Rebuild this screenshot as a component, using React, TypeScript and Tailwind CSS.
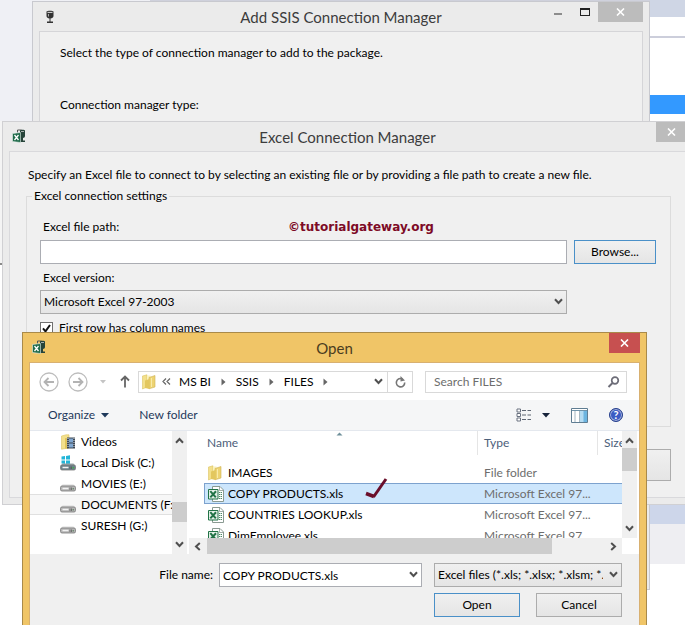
import { useState, type ReactNode } from "react";

const buttonClass =
  "border border-[#acacac] bg-linear-to-b from-[#f0f0f0] to-[#e5e5e5] text-black";
const primaryButtonClass =
  "border border-[#4a90c8] bg-linear-to-b from-[#f0f0f0] to-[#e5e5e5] text-black";

const drives = [
  { label: "Videos", kind: "videos" },
  { label: "Local Disk (C:)", kind: "system" },
  { label: "MOVIES (E:)", kind: "drive" },
  { label: "DOCUMENTS (F:)", kind: "drive" },
  { label: "SURESH (G:)", kind: "drive" },
];

const files = [
  { name: "IMAGES", type: "File folder", folder: true },
  { name: "COPY PRODUCTS.xls", type: "Microsoft Excel 97...", folder: false },
  { name: "COUNTRIES LOOKUP.xls", type: "Microsoft Excel 97...", folder: false },
  { name: "DimEmployee.xls", type: "Microsoft Excel 97...", folder: false },
];

function Chevron({ className = "" }: { className?: string }) {
  return (
    <svg viewBox="0 0 9 7" className={`h-[7px] w-[9px] ${className}`} aria-hidden="true">
      <path d="M1 1.2 4.5 5 8 1.2" fill="none" stroke="#505050" strokeWidth="2" />
    </svg>
  );
}

function CloseIcon() {
  return (
    <svg viewBox="0 0 9 8" className="h-2 w-[9px]" aria-hidden="true">
      <path d="M1 .5 8 7.5M8 .5 1 7.5" stroke="#fff" strokeWidth="1.6" />
    </svg>
  );
}

function ConnectionIcon() {
  return (
    <svg viewBox="0 0 10 14" className="h-3.5 w-2.5" aria-hidden="true">
      <path d="M1.500 1.500C2 .6 8 .6 8.500 1.500V6c0 1.500-1.500 2.500-3 2.500v3h2.500V13h-6v-1.500h2.500v-3C3 8.500 1.500 7.500 1.500 6Z" fill="#333" />
      <path d="M2.500 2.400h5" stroke="#ddd" strokeWidth="1" />
      <path d="M3.500 4v2.500" stroke="#aaa" strokeWidth="1" />
    </svg>
  );
}

function ExcelLinkIcon() {
  return (
    <svg viewBox="0 0 14 15" className="h-[15px] w-3.5" aria-hidden="true">
      <path d="M5.500 3.500V1h4" fill="none" stroke="#555" />
      <path d="M8 1.500C8 .5 13 .5 13 1.500V7c0 1-1 2-2 2v2.500h2V13H8Z" fill="#26443a" />
      <path d="M9 2.500h3" stroke="#ccc" strokeWidth=".8" />
      <path d="M.5 4.500 8.500 3.500v10L.5 12.500Z" fill="#1f6b4a" stroke="#e8f0ec" strokeWidth=".6" />
      <path d="m2.500 6 4 5M6.500 6l-4 5" stroke="#fff" strokeWidth="1.300" />
    </svg>
  );
}

function FolderIcon() {
  return (
    <svg viewBox="0 0 14 16" className="h-4 w-3.5 shrink-0" aria-hidden="true">
      <path d="M.5 2 5 .8V13l-4.500 2Z" fill="#f3e08b" stroke="#dcc262" strokeWidth=".6" />
      <path d="M5 1.500h3.500V14L5 13Z" fill="#fbf2bd" />
      <path d="M7 3.500 13 1.500V13l-6 1.800Z" fill="#edd372" stroke="#cfb255" strokeWidth=".6" />
      <path d="M3 6.500 7.500 5v10L3 14Z" fill="#e3c75e" />
      <path d="M9.500 4v9" stroke="#f9eba8" />
    </svg>
  );
}

function XlsIcon() {
  return (
    <svg viewBox="0 0 16 16" className="h-4 w-4 shrink-0" aria-hidden="true">
      <path d="M4.500.5h7.500l3.500 3.500v11.500h-11Z" fill="#fff" stroke="#8a9a92" />
      <path d="M11.500.8V4.500h3.500" fill="none" stroke="#8a9a92" strokeWidth=".8" />
      <path d="M11 6.500h3M11 8.500h3M11 10.500h3M11 12.500h3" stroke="#4d8a66" strokeWidth="1" strokeDasharray="1.300 .5" />
      <path d="M.5 3.500h9.500v9.500H.5Z" fill="#e6f2ea" stroke="#217346" />
      <path d="m2.300 5.200 5.500 6.200M8 5.200l-5.700 6.200" stroke="#217346" strokeWidth="2" />
    </svg>
  );
}

function DriveIcon({ kind }: { kind: string }) {
  if (kind === "videos") {
    return (
      <svg viewBox="0 0 16 16" className="h-4 w-4 shrink-0" aria-hidden="true">
        <path d="M1.500 2 6 .8h3V14l-7.500 1.200Z" fill="#f3e08b" stroke="#dcc262" strokeWidth=".6" />
        <path d="M5 4h3v10.500H5Z" fill="#e0c45c" />
        <path d="M7 3.500h8v11H7Z" fill="#3c4653" />
        <path d="M9 4.500h4v4H9ZM9 9.500h4v4H9Z" fill="#7fa6d0" />
        <path d="M8 4v10M14 4v10" stroke="#dfe4ea" strokeWidth="1" strokeDasharray="1 1" />
      </svg>
    );
  }
  return (
    <svg viewBox="0 0 16 16" className="h-4 w-4 shrink-0" aria-hidden="true">
      {kind === "system" && (
        <path d="m1.500 1.500 3.500-.5v3.500H1.500ZM6 .9l4-.6v4.200H6ZM1.500 5.500H5V9l-3.500-.5ZM6 5.500h4v4L6 9Z" fill="#22b5d8" />
      )}
      <path d="M2.500 8.500h11l2 2.500H.5Z" fill={kind === "system" ? "#9aa7ad" : "#dcdcdc"} />
      <rect x=".5" y="10" width="15" height="5" rx="1.500" fill={kind === "system" ? "#6d838c" : "#b4b4b4"} stroke="#7a7a7a" strokeWidth=".8" />
      <path d="M2.500 12.500h6" stroke="#f2f2f2" strokeWidth="1.500" />
      <path d="M10 11.500v2.500M11.500 11.500v2.500" stroke="#555" strokeWidth=".7" />
      <path d="M12.500 12.800h1.500" stroke={kind === "system" ? "#3fae49" : "#6f8a72"} strokeWidth="1.400" />
    </svg>
  );
}

type TitleBarProps = {
  icon: ReactNode;
  title: string;
  titleClass?: string;
  children: ReactNode;
};

function TitleBar({ icon, title, titleClass = "text-[#3c3c3c]", children }: TitleBarProps) {
  return (
    <header className="grid h-[29px] grid-cols-[1fr_auto_1fr] items-center">
      <div className="pl-[3px]">{icon}</div>
      <h2 className={`text-[15px] leading-5 ${titleClass}`}>{title}</h2>
      <div className="flex items-start justify-end self-start">{children}</div>
    </header>
  );
}

function Desktop() {
  return (
    <div className="flex h-full justify-between bg-white" aria-hidden="true">
      <div className="w-[150px]">
        <div className="h-[121px] bg-[#eff0f5]" />
        <div className="h-36 border-b-2 border-[#8a8a8a] bg-[#f4f4f4]" />
      </div>
      <div className="h-1 flex-1 bg-[#cfd1dc]" />
      <div className="w-[35px]">
        <div className="h-[17px] bg-[#cfd6e5]" />
        <div className="h-[21px] border-b-2 border-[#cccedb] bg-white" />
        <div className="h-[57px] bg-white" />
        <div className="h-[19px] bg-[#3399ff]" />
        <div className="h-[390px] bg-white" />
        <div className="h-5 bg-[#cdd6ea]" />
        <div className="h-10 bg-[#eeeef2]" />
      </div>
    </div>
  );
}

function AddConnectionWindow() {
  return (
    <section className="absolute top-px right-[35px] left-8 h-[589px] border border-[#c8c9cf] bg-[#ebebeb] px-1.5 pb-1.5">
      <TitleBar icon={<div className="pl-[3px]"><ConnectionIcon /></div>} title="Add SSIS Connection Manager">
        <button type="button" aria-label="Minimize" className="flex h-5 w-[27px] items-center justify-center pt-1">
          <span className="h-0.5 w-2 bg-[#8c8c8c]" />
        </button>
        <button type="button" aria-label="Maximize" className="flex h-5 w-[27px] items-center justify-center">
          <span className="h-2 w-2.5 border border-t-2 border-[#222]" />
        </button>
        <button type="button" aria-label="Close" className="flex h-5 w-[45px] items-center justify-center bg-[#bcbcbc]">
          <CloseIcon />
        </button>
      </TitleBar>
      <div className="h-[551px] border border-[#d5d5d8] bg-[#f0f0f0] px-5 pt-[13px]">
        <p>Select the type of connection manager to add to the package.</p>
        <p className="mt-9">Connection manager type:</p>
      </div>
    </section>
  );
}

function ExcelConnectionWindow() {
  const [path, setPath] = useState("");
  const [headerRow, setHeaderRow] = useState(true);

  return (
    <section className="absolute top-[121px] -right-2 left-0.5 border border-[#d0d0d3] bg-[#ebebeb] px-1.5 pb-1.5">
      <TitleBar icon={<ExcelLinkIcon />} title="Excel Connection Manager">
        <button type="button" aria-label="Close" className="flex h-5 w-[30px] items-center justify-center bg-[#bcbcbc]">
          <CloseIcon />
        </button>
      </TitleBar>
      <div className="border border-[#d9d9dc] bg-[#f0f0f0] pt-[15px] pr-3.5 pb-4 pl-4">
        <p className="pl-0.5 whitespace-nowrap">
          Specify an Excel file to connect to by selecting an existing file or by providing a file path to create a new file.
        </p>
        <fieldset className="mt-[5px] border border-[#dcdcdc] pr-3.5 pb-[90px] pl-[13px]">
          <legend className="-ml-2 px-0.5">Excel connection settings</legend>
          <div className="flex items-center pt-[15px] pl-[3px]">
            <label htmlFor="excel-path" className="w-[245px]">Excel file path:</label>
            <span className="font-['DejaVu_Sans'] text-[12px] leading-4 font-bold text-[#7d0a26]">©tutorialgateway.org</span>
          </div>
          <div className="mt-[5px] grid grid-cols-[1fr_82px] gap-x-[7px]">
            <input
              id="excel-path"
              type="text"
              value={path}
              onChange={(e) => setPath(e.target.value)}
              className="h-6 border border-[#abadb3] bg-white px-1"
            />
            <button type="button" className={`h-6 ${primaryButtonClass}`}>Browse...</button>
            <label htmlFor="excel-version" className="col-span-2 mt-1.5 pl-[3px]">Excel version:</label>
            <div className="relative mt-1">
              <select id="excel-version" className={`h-6 w-full appearance-none px-[3px] ${buttonClass}`}>
                <option>Microsoft Excel 97-2003</option>
              </select>
              <Chevron className="pointer-events-none absolute top-2 right-1" />
            </div>
          </div>
          <label className="mt-1.5 flex items-center gap-1.5">
            <span className="relative flex">
              <input
                type="checkbox"
                checked={headerRow}
                onChange={(e) => setHeaderRow(e.target.checked)}
                className="peer h-[13px] w-[13px] appearance-none border border-[#707070] bg-white"
              />
              <svg viewBox="0 0 13 13" className="pointer-events-none absolute inset-0 hidden h-[13px] w-[13px] peer-checked:block" aria-hidden="true">
                <path d="m3 6.300 2.500 3L10 3" fill="none" stroke="#111" strokeWidth="2" />
              </svg>
            </span>
            First row has column names
          </label>
        </fieldset>
        <div className="mt-[22px] flex justify-end">
          <button type="button" className={`h-8 w-[86px] ${buttonClass}`}>OK</button>
        </div>
      </div>
    </section>
  );
}

function Crumb({ label }: { label: string }) {
  return (
    <>
      <button type="button">{label}</button>
      <svg viewBox="0 0 5 8" className="mx-2.5 h-2 w-[5px]" aria-hidden="true">
        <path d="M.5.5 4.500 4 .5 7.500Z" fill="#666" />
      </svg>
    </>
  );
}

function NavigationRow() {
  return (
    <div className="flex h-[37px] items-center bg-white pr-3 pl-[9px]">
      <button type="button" aria-label="Back">
        <svg viewBox="0 0 20 20" className="h-5 w-5" aria-hidden="true">
          <circle cx="10" cy="10" r="9" fill="none" stroke="#bdbdbd" strokeWidth="1.300" />
          <path d="M15 10H6M9.500 6 5.500 10l4 4" fill="none" stroke="#b3b3b3" strokeWidth="1.800" />
        </svg>
      </button>
      <button type="button" aria-label="Forward" className="ml-[9px]">
        <svg viewBox="0 0 20 20" className="h-5 w-5" aria-hidden="true">
          <circle cx="10" cy="10" r="9" fill="none" stroke="#bdbdbd" strokeWidth="1.300" />
          <path d="M5 10h9M10.500 6l4 4-4 4" fill="none" stroke="#b3b3b3" strokeWidth="1.800" />
        </svg>
      </button>
      <button type="button" aria-label="Recent locations" className="ml-3">
        <svg viewBox="0 0 6 4" className="h-1 w-1.5" aria-hidden="true">
          <path d="M0 0h6L3 3.500Z" fill="#c4c4c4" />
        </svg>
      </button>
      <button type="button" aria-label="Up" className="ml-3.5">
        <svg viewBox="0 0 10 13" className="h-[13px] w-2.5" aria-hidden="true">
          <path d="M5 12.500V1.500M1 5.500l4-4 4 4" fill="none" stroke="#666" strokeWidth="1.800" />
        </svg>
      </button>
      <div className="ml-2 flex h-[22px] min-w-0 flex-1 items-center border border-[#d9d9d9] pl-[3px]">
        <FolderIcon />
        <svg viewBox="0 0 9 7" className="mr-2 ml-1.5 h-[7px] w-[9px]" aria-hidden="true">
          <path d="M4 .5 1 3.500l3 3M8 .5 5 3.500l3 3" fill="none" stroke="#666" strokeWidth="1.200" />
        </svg>
        <Crumb label="MS BI" />
        <Crumb label="SSIS" />
        <Crumb label="FILES" />
        <button type="button" aria-label="Previous locations" className="ml-auto px-1">
          <Chevron />
        </button>
        <button type="button" aria-label="Refresh" className="flex h-full w-[25px] items-center justify-center border-l border-[#d9d9d9]">
          <svg viewBox="0 0 11 12" className="h-3 w-[11px]" aria-hidden="true">
            <path d="M7.500 3A4.200 4.200 0 1 0 9.700 6.500" fill="none" stroke="#777" strokeWidth="1.600" />
            <path d="M5.500 0v5.500L10 4.500Z" fill="#777" />
          </svg>
        </button>
      </div>
      <div className="ml-3 flex h-[22px] w-[202px] items-center border border-[#d9d9d9] pr-1.5 pl-2">
        <input
          type="search"
          aria-label="Search FILES"
          placeholder="Search FILES"
          className="min-w-0 flex-1 outline-none placeholder:text-[#6d6d6d]"
        />
        <svg viewBox="0 0 13 12" className="h-3 w-[13px]" aria-hidden="true">
          <circle cx="8" cy="4.500" r="3.300" fill="none" stroke="#6d6d78" strokeWidth="1.700" />
          <path d="M5.500 7 1.500 11" stroke="#6d6d78" strokeWidth="2" />
        </svg>
      </div>
    </div>
  );
}

function Toolbar() {
  return (
    <div className="flex h-[31px] items-center border-b border-[#e4e8ee] bg-[#f5f6f7] pr-4 pl-[18px] text-[#1e395b]">
      <button type="button" className="flex items-center gap-1.5">
        Organize
        <svg viewBox="0 0 8 5" className="h-[5px] w-2" aria-hidden="true">
          <path d="M0 0h8L4 4.500Z" fill="#1e395b" />
        </svg>
      </button>
      <button type="button" className="ml-[30px]">New folder</button>
      <button type="button" aria-label="Change view" className="ml-auto">
        <svg viewBox="0 0 16 14" className="h-3.5 w-4" aria-hidden="true">
          <path d="M1 1h3.500v3H1ZM1 5.500h3.500v3H1ZM1 10h3.500v3H1Z" fill="#fff" stroke="#6a7280" />
          <path d="M6 2.500h4M11.500 2.500H15M6 7h4M11.500 7H15M6 11.500h4M11.500 11.500H15" stroke="#5e6673" strokeWidth="1.100" />
        </svg>
      </button>
      <button type="button" aria-label="More views" className="ml-2.5">
        <svg viewBox="0 0 8 5" className="h-[5px] w-2" aria-hidden="true">
          <path d="M0 0h8L4 4.500Z" fill="#16233a" />
        </svg>
      </button>
      <button type="button" aria-label="Preview pane" className="ml-[21px]">
        <svg viewBox="0 0 17 15" className="h-[15px] w-[17px]" aria-hidden="true">
          <path d="M.5.5h16v14H.5Z" fill="#fff" stroke="#5f7d92" />
          <path d="M1 2.500h15" stroke="#6f93aa" />
          <path d="M9 3h7v11H9Z" fill="#b5dcf2" />
          <path d="M12.500 3H16v11h-3.500Z" fill="#6db5e0" />
          <path d="M4 3v11M8.500 3v11" stroke="#8fa5b3" strokeWidth=".8" />
        </svg>
      </button>
      <button type="button" aria-label="Help" className="relative ml-[21px] flex h-3.5 w-3.5 items-center justify-center rounded-full border border-[#27408b] bg-[#3b5cc4] text-[11px] leading-3 font-bold text-white ring-1 ring-[#aab6dd] ring-inset">
        ?
      </button>
    </div>
  );
}

function FolderTree() {
  return (
    <div className="flex h-[123px] w-[157px] bg-white">
      <ul className="min-w-0 flex-1 overflow-hidden">
        {drives.map((drive) => (
          <li
            key={drive.label}
            className={`flex h-[21px] items-center gap-[5px] border-y pl-[30px] whitespace-nowrap ${
              drive.label.startsWith("DOCUMENTS") ? "border-[#e0e0e0] bg-[#f7f7f7]" : "border-transparent"
            }`}
          >
            <DriveIcon kind={drive.kind} />
            {drive.label}
          </li>
        ))}
      </ul>
      <div className="flex w-[15px] flex-col items-center bg-[#f0f0f0] py-1.5">
        <Chevron className="rotate-180" />
        <div className="mt-[58px] h-5 w-full bg-[#cdcdcd]" />
        <Chevron className="mt-auto" />
      </div>
    </div>
  );
}

function FileList() {
  const [selected, setSelected] = useState("COPY PRODUCTS.xls");

  return (
    <div className="min-w-0 flex-1 bg-white pr-0.5">
      <div className="flex h-[107px]">
        <div className="relative min-w-0 flex-1 overflow-hidden pl-[15px]">
          <svg viewBox="0 0 7 4" className="absolute top-px left-[147px] h-1 w-[7px]" aria-hidden="true">
            <path d="M.5 3.500 3.500.5l3 3Z" fill="#6f8f9a" />
          </svg>
          <table className="w-full table-fixed border-separate border-spacing-0 text-left whitespace-nowrap">
            <thead className="text-[#4c607a]">
              <tr className="h-[31px] align-top">
                <th className="p-0 font-normal"><div className="mb-[7px] h-6 border-r border-[#e5e5e5] pt-1 pl-[3px]">Name</div></th>
                <th className="w-[120px] p-0 font-normal"><div className="h-6 border-r border-[#e5e5e5] pt-1 pl-1.5">Type</div></th>
                <th className="w-6 p-0 font-normal"><div className="pt-1 pl-1.5">Size</div></th>
              </tr>
            </thead>
            <tbody>
              {files.map((file) => {
                const cell = file.name === selected
                  ? "border-y border-[#7da2ce] bg-[#cde6fc]"
                  : "border-y border-transparent";
                return (
                  <tr key={file.name} onClick={() => setSelected(file.name)}>
                    <td className={`h-[21px] p-0 ${cell} ${file.name === selected ? "border-l" : ""}`}>
                      <div className={`flex h-[19px] items-center ${file.name === selected ? "pl-[3px]" : "pl-1"}`}>
                        <span className="flex w-5">{file.folder ? <FolderIcon /> : <XlsIcon />}</span>
                        {file.name}
                      </div>
                    </td>
                    <td className={`h-[21px] p-0 pl-1.5 text-[#6d6d6d] ${cell}`}>{file.type}</td>
                    <td className={`h-[21px] p-0 ${cell}`} />
                  </tr>
                );
              })}
            </tbody>
          </table>
          {/* hand-drawn tick beside the chosen workbook */}
          <svg viewBox="0 0 23 24" className="pointer-events-none absolute top-[46px] left-44 h-6 w-[23px]" aria-hidden="true">
            <path d="M1 16.500 9 19.500" fill="none" stroke="#6b0f2b" strokeWidth="3.500" />
            <path d="M8.500 20 21 2" fill="none" stroke="#6b0f2b" strokeWidth="3" />
          </svg>
        </div>
        <div className="flex w-[15px] flex-col items-center bg-[#f0f0f0] py-1.5">
          <Chevron className="rotate-180" />
          <div className="mt-1 h-[23px] w-full bg-[#cdcdcd]" />
          <Chevron className="mt-auto" />
        </div>
      </div>
      <div className="mr-[15px] flex h-4 items-center bg-[#f0f0f0] px-1">
        <Chevron className="rotate-90" />
        <div className="mr-[57px] ml-[5px] h-full flex-1 bg-[#cdcdcd]" />
        <Chevron className="-rotate-90" />
      </div>
    </div>
  );
}

function OpenWindow() {
  const [fileName, setFileName] = useState("COPY PRODUCTS.xls");

  return (
    <section className="absolute top-[332px] right-[38px] left-[22px] border border-[#a98a4a] bg-[#f0c567] px-1.5 pb-1.5">
      <TitleBar icon={<ExcelLinkIcon />} title="Open" titleClass="text-[#4a3c20]">
        <button type="button" aria-label="Close" className="flex h-5 w-[31px] items-center justify-center bg-[#c75050]">
          <CloseIcon />
        </button>
      </TitleBar>
      <div className="border border-[#d8b070] bg-[#f0f0f0]">
        <NavigationRow />
        <Toolbar />
        <div className="flex gap-0.5 bg-white">
          <FolderTree />
          <FileList />
        </div>
        <div className="grid grid-cols-[1fr_203px_188px] items-center gap-x-3 pt-[9px] pr-[17px] pb-4">
          <label htmlFor="file-name" className="-mr-1.5 text-right">File name:</label>
          <div className="relative">
            <input
              id="file-name"
              type="text"
              value={fileName}
              onChange={(e) => setFileName(e.target.value)}
              className="h-6 w-full border border-[#abadb3] bg-white px-[3px]"
            />
            <Chevron className="pointer-events-none absolute top-2 right-1" />
          </div>
          <div className="relative">
            <select aria-label="File type" className={`h-6 w-full appearance-none pr-[18px] pl-[3px] ${buttonClass}`}>
              <option>Excel files (*.xls; *.xlsx; *.xlsm; *.xlsb)</option>
            </select>
            <Chevron className="pointer-events-none absolute top-2 right-1" />
          </div>
          <div className="col-start-3 mt-1.5 flex justify-between">
            <button type="button" className={`h-6 w-[86px] ${primaryButtonClass}`}>Open</button>
            <button type="button" className={`h-6 w-[86px] ${buttonClass}`}>Cancel</button>
          </div>
        </div>
      </div>
    </section>
  );
}

export default function App() {
  return (
    <main className="relative h-screen overflow-hidden bg-white font-[Lato,sans-serif] text-[12px] leading-4 text-black">
      <Desktop />
      <AddConnectionWindow />
      <ExcelConnectionWindow />
      <OpenWindow />
    </main>
  );
}
